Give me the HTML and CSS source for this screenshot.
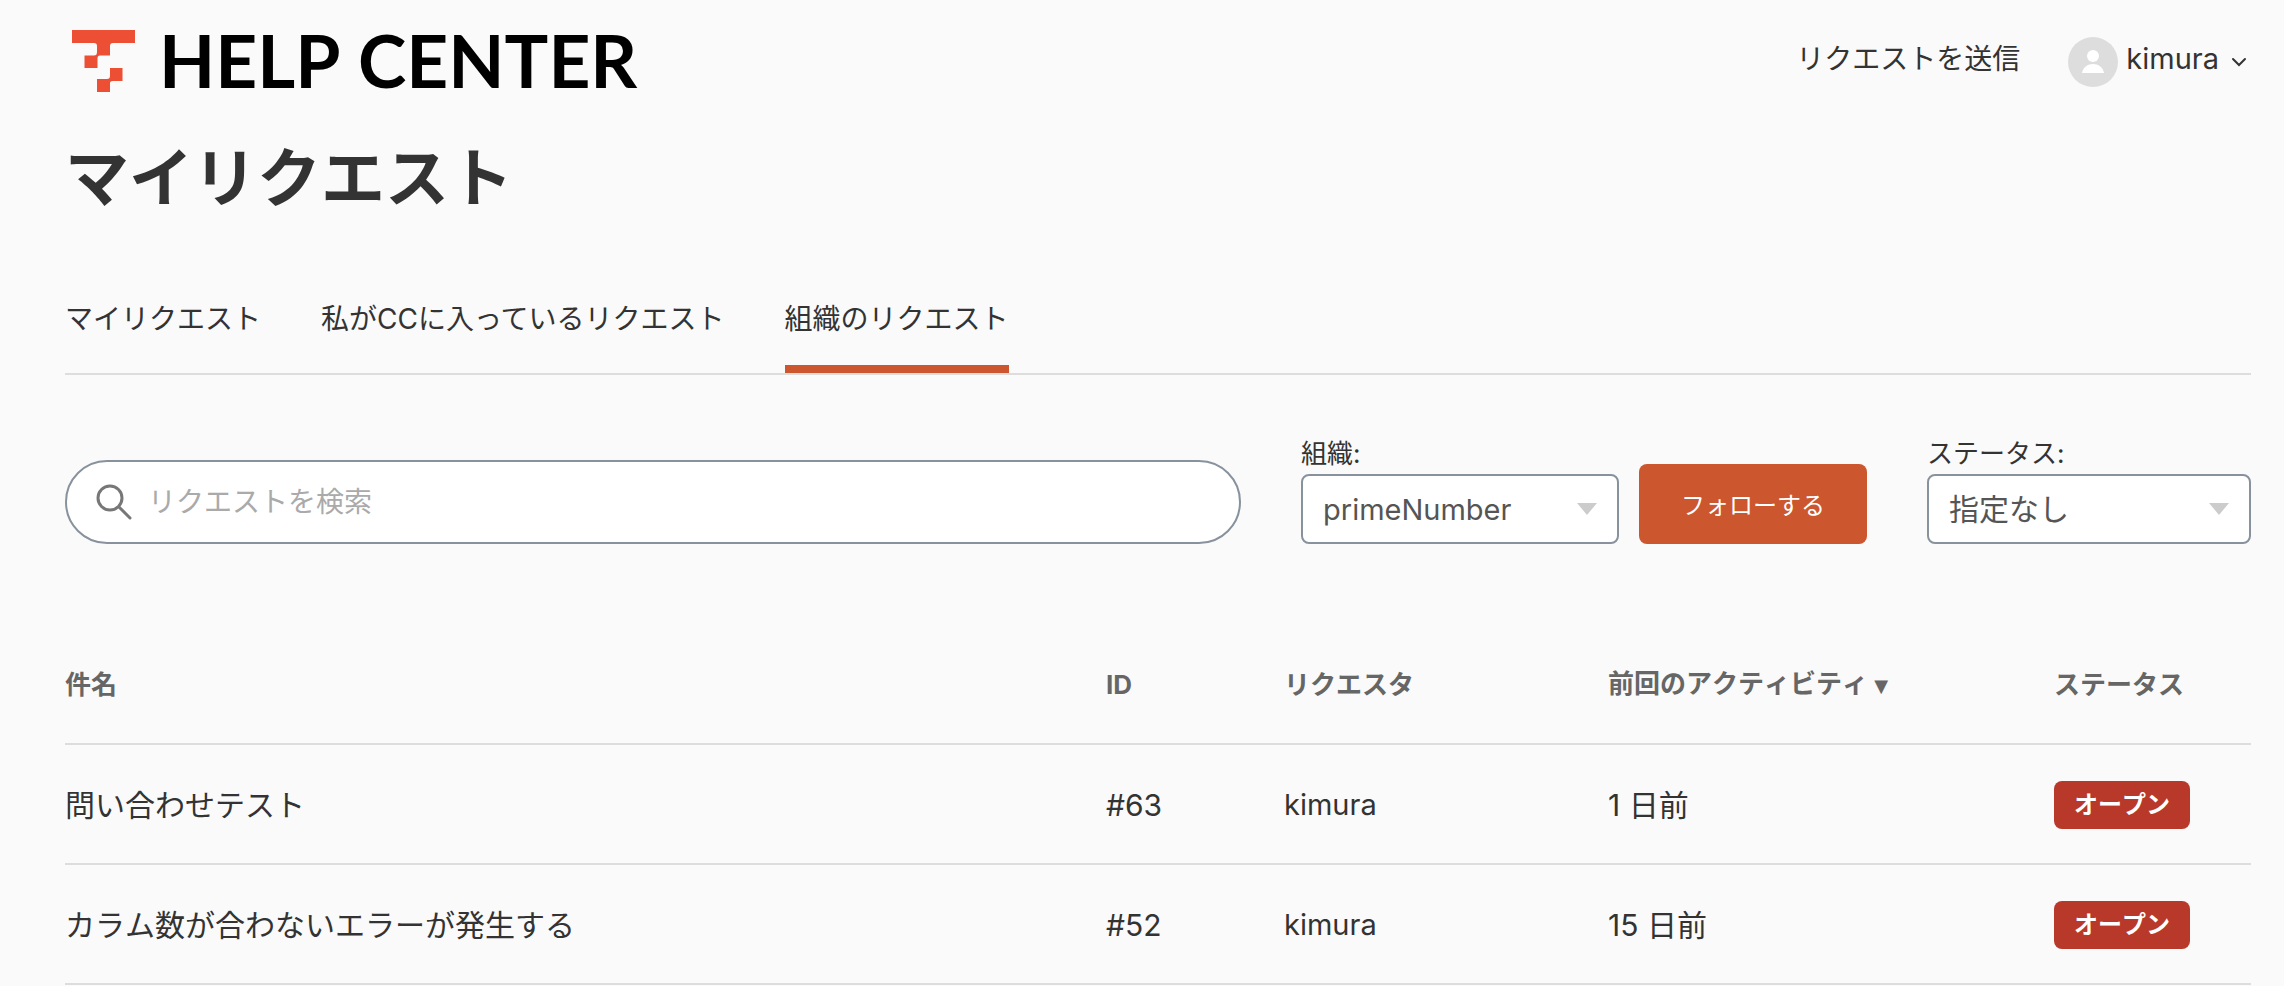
FILE: index.html
```html
<!DOCTYPE html>
<html lang="ja">
<head>
    <meta charset="UTF-8">
    <meta name="viewport" content="width=device-width, initial-scale=1.0">
    <title>マイリクエスト</title>
    <link rel="stylesheet" href="styles.css">
</head>
<body>

    <header class="header">
        <a class="logo" href="#">
            <svg class="logo-mark" viewBox="0 0 63 62" aria-hidden="true">
                <path d="M0 0H63V13H41Q38 13 38 16V25.500H28Q25.500 25.500 25.500 28V38H12.500V25.500H22Q25 25.500 25 22V16Q25 13 22 13H0Z"/>
                <path d="M38 38H50.500V51H41Q38 51 38 53V62H25V49H35Q38 49 38 46Z"/>
            </svg>
            <span class="logo-text">HELP CENTER</span>
        </a>
        <nav class="user-nav">
            <a class="submit-request" href="#">リクエストを送信</a>
            <button class="user-menu" type="button">
                <svg class="avatar" viewBox="0 0 50 50" aria-hidden="true">
                    <circle cx="25" cy="25" r="25" fill="#ddd"/>
                    <circle cx="25" cy="19" r="6" fill="#fff"/>
                    <path d="M14 36C16 24 34 24 36 36Z" fill="#fff"/>
                </svg>
                <span class="user-name">kimura</span>
                <svg class="chevron" viewBox="0 0 16 10" aria-hidden="true">
                    <path d="M2 2L8 8L14 2"/>
                </svg>
            </button>
        </nav>
    </header>

    <main class="container">
        <h1>マイリクエスト</h1>

        <nav class="tabs">
            <a href="#">マイリクエスト</a>
            <a href="#">私がCCに入っているリクエスト</a>
            <a class="active" href="#" aria-current="page">組織のリクエスト</a>
        </nav>

        <!-- Search and filters -->
        <form class="filters">
            <div class="search">
                <svg class="search-icon" viewBox="0 0 36 36" aria-hidden="true">
                    <circle cx="14" cy="14" r="12"/>
                    <path d="M23 23L34 34"/>
                </svg>
                <input type="search" placeholder="リクエストを検索" aria-label="リクエストを検索">
            </div>
            <div class="organization">
                <div class="filter">
                    <label for="organization">組織:</label>
                    <div class="select-box">
                        <select id="organization">
                            <option>primeNumber</option>
                        </select>
                    </div>
                </div>
                <button class="follow-btn" type="button">フォローする</button>
            </div>
            <div class="filter">
                <label for="status">ステータス:</label>
                <div class="select-box">
                    <select id="status">
                        <option>指定なし</option>
                    </select>
                </div>
            </div>
        </form>

        <table class="requests">
            <thead>
                <tr>
                    <th class="col-subject">件名</th>
                    <th class="col-id">ID</th>
                    <th class="col-requester">リクエスタ</th>
                    <th class="col-activity">前回のアクティビティ <span class="sort">▼</span></th>
                    <th class="col-status">ステータス</th>
                </tr>
            </thead>
            <tbody>
                <tr>
                    <td><a href="#">問い合わせテスト</a></td>
                    <td>#63</td>
                    <td class="requester">kimura</td>
                    <td>1 日前</td>
                    <td><span class="status">オープン</span></td>
                </tr>
                <tr>
                    <td><a href="#">カラム数が合わないエラーが発生する</a></td>
                    <td>#52</td>
                    <td class="requester">kimura</td>
                    <td>15 日前</td>
                    <td><span class="status">オープン</span></td>
                </tr>
            </tbody>
        </table>
    </main>

</body>
</html>
```
FILE: styles.css
```css
* {
    box-sizing: border-box;
}

body {
    margin: 0;
    padding: 0 33px 0 65px;
    background: #fafafa;
    color: #333;
    font-family: 'Inter', 'Noto Sans CJK JP', sans-serif;
    font-size: 30px;
    font-kerning: none;
    line-height: 44px;
}

a {
    color: inherit;
    text-decoration: none;
}

button,
input,
select {
    font-family: inherit;
    font-size: inherit;
    line-height: inherit;
    color: inherit;
}

/* Header */
.header {
    display: flex;
    justify-content: space-between;
    align-items: center;
    height: 122px;
}

.logo {
    display: flex;
    align-items: center;
    gap: 24px;
    padding-left: 7px;
}

.logo-mark {
    width: 63px;
    height: 62px;
    fill: #ec4f33;
}

.logo-text {
    padding-bottom: 2px;
    color: #000;
    font-family: 'Lato', sans-serif;
    font-size: 73px;
    font-weight: 700;
    line-height: 72px;
}

.user-nav {
    display: flex;
    align-items: center;
    gap: 48px;
}

.submit-request {
    padding-bottom: 4px;
    font-size: 28px;
}

.user-menu {
    display: flex;
    align-items: center;
    gap: 8px;
    padding: 2px 4px 0 0;
    border: none;
    background: none;
    cursor: pointer;
}

.user-name {
    padding-bottom: 6px;
    font-size: 29px;
}

.avatar {
    width: 50px;
    height: 50px;
}

.chevron {
    width: 16px;
    height: 10px;
    margin-left: 4px;
    fill: none;
    stroke: #333;
    stroke-width: 2;
    stroke-linecap: round;
}

h1 {
    margin: 0;
    font-size: 64px;
    font-weight: 700;
    line-height: 112px;
}

/* Tabs */
.tabs {
    display: flex;
    gap: 60px;
    margin-top: 63px;
    border-bottom: 2px solid #ddd;
    font-size: 28px;
    font-kerning: auto;
}

.tabs a {
    padding-bottom: 24px;
    border-bottom: 8px solid transparent;
}

.tabs .active {
    border-bottom-color: #cc562d;
}

/* Filters */
.filters {
    display: flex;
    align-items: flex-end;
    gap: 60px;
    margin-top: 59px;
}

.search {
    display: flex;
    align-items: center;
    flex: 1;
    gap: 16px;
    height: 84px;
    padding: 0 29px;
    border: 2px solid #87929d;
    border-radius: 42px;
    background: #fff;
}

.search-icon {
    width: 36px;
    height: 36px;
    fill: none;
    stroke: #777;
    stroke-width: 3;
    stroke-linecap: round;
}

.search input {
    flex: 1;
    min-width: 0;
    padding: 0;
    border: none;
    outline: none;
    background: none;
    font-size: 28px;
}

.search input::placeholder {
    color: #aaa;
}

.organization {
    display: flex;
    align-items: flex-end;
    gap: 20px;
}

.filter label {
    display: block;
    font-size: 26px;
    line-height: 40px;
}

.select-box {
    position: relative;
    width: 324px;
}

.organization .select-box {
    width: 318px;
}

.select-box select {
    display: block;
    width: 100%;
    height: 70px;
    padding: 0 60px 0 20px;
    border: 2px solid #87929d;
    border-radius: 8px;
    background: #fff;
    color: #555;
    appearance: none;
}

.organization select {
    padding-top: 2px;
    font-size: 29px;
}

.select-box::after {
    content: "";
    position: absolute;
    top: 29px;
    right: 22px;
    border: 10px solid transparent;
    border-top: 12px solid #ccc;
    border-bottom: none;
    pointer-events: none;
}

.follow-btn {
    height: 80px;
    padding: 4px 42px 0;
    border: none;
    border-radius: 8px;
    background: #cc562d;
    color: #fff;
    font-size: 24px;
    cursor: pointer;
}

/* Requests table */
.requests {
    width: 100%;
    margin-top: 81px;
    border-collapse: separate;
    border-spacing: 0;
    table-layout: fixed;
}

.requests th,
.requests td {
    height: 120px;
    padding: 2px 0 0;
    border-bottom: 2px solid #ddd;
    text-align: left;
}

.requests th {
    color: #666;
    font-size: 26px;
    font-weight: 700;
}

.requests .requester {
    font-size: 29px;
}

.col-id {
    width: 178px;
}

.col-requester {
    width: 324px;
}

.col-activity {
    width: 446px;
}

.col-status {
    width: 197px;
}

.sort {
    font-family: 'DejaVu Sans', sans-serif;
    font-size: 18px;
    vertical-align: middle;
}

.status {
    display: inline-block;
    padding: 0 20px;
    border-radius: 8px;
    background: #b8382a;
    color: #fff;
    font-size: 24px;
    font-weight: 700;
    line-height: 48px;
    vertical-align: middle;
}
```
